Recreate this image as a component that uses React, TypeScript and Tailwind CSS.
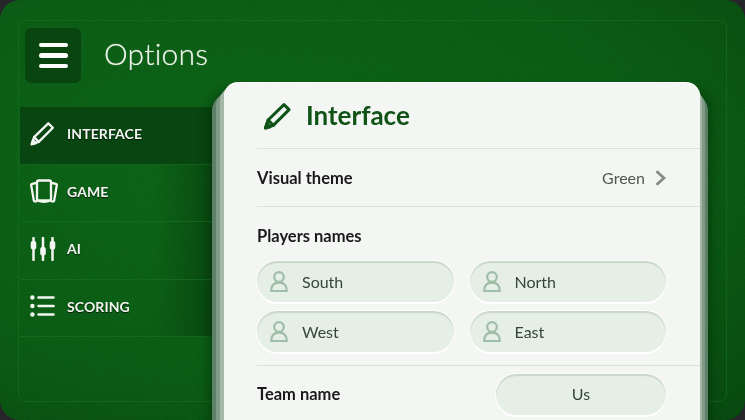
import React from 'react';

const FONT = "font-['Lato','Liberation_Sans',sans-serif]";

const PencilIcon: React.FC<{ className?: string; width?: string }> = ({ className, width = '2.8' }) => (
  <svg viewBox="0 0 28 28" fill="none" stroke="currentColor" strokeWidth={width} strokeLinejoin="round" strokeLinecap="round" className={className}>
    <path d="M2 26 L4.6 18 L20.5 2.6 L25.6 7.6 L9.8 23.4 Z" />
    <path d="M4.6 18 L9.8 23.4" />
    <path d="M2 26 L3.4 21.6 L6.6 24.8 Z" fill="currentColor" />
  </svg>
);

const CardsIcon = () => (
  <svg viewBox="0 0 28 25" fill="none" stroke="currentColor" strokeWidth="2.3" strokeLinejoin="round" className="h-[25px] w-[28px]">
    <path d="M6 4 L2.2 4.8 Q1 5 1.2 6.2 L3.8 21.4 Q4 22.4 5 22.4 L7 22.4" />
    <path d="M22 4 L25.8 4.8 Q27 5 26.8 6.2 L24.2 21.4 Q24 22.4 23 22.4 L21 22.4" />
    <rect x="7" y="1.5" width="14" height="20" rx="1.8" />
    <path d="M7 21.5 Q14 24 21 21.5" />
  </svg>
);

const SlidersIcon = () => (
  <svg viewBox="0 0 26 24" fill="none" stroke="currentColor" strokeWidth="2.5" strokeLinecap="round" className="h-[24px] w-[26px]">
    <path d="M3.5 1 V23 M13 1 V23 M22.5 1 V23" />
    <path d="M3.5 6.5 V10 M13 12.5 V16 M22.5 6.5 V10" strokeWidth="5.6" />
  </svg>
);

const ListIcon = () => (
  <svg viewBox="0 0 25 22" fill="none" stroke="currentColor" strokeWidth="2.6" strokeLinecap="round" className="h-[22px] w-[25px]">
    <path d="M8.5 2.5 H23.5 M8.5 11 H23.5 M8.5 19.5 H23.5" />
    <circle cx="2.4" cy="2.5" r="2.2" fill="currentColor" stroke="none" />
    <circle cx="2.4" cy="11" r="2.2" fill="currentColor" stroke="none" />
    <circle cx="2.4" cy="19.5" r="2.2" fill="currentColor" stroke="none" />
  </svg>
);

const PersonIcon = () => (
  <svg viewBox="0 0 18 21" fill="none" stroke="currentColor" strokeWidth="2.2" strokeLinejoin="round" className="h-[21px] w-[18px] shrink-0 text-[#a0bda7]">
    <circle cx="9" cy="6" r="4.8" />
    <path d="M1.2 20 Q1.2 11.6 9 11.6 Q16.8 11.6 16.8 20 Z" />
  </svg>
);

const Chevron = () => (
  <svg viewBox="0 0 11 16" fill="none" stroke="currentColor" strokeWidth="2.8" className="h-[16px] w-[11px] text-[#868c88]">
    <path d="M1.5 1.2 L9 8 L1.5 14.8" />
  </svg>
);

const NavRow: React.FC<{ label: string; active?: boolean; icon: React.ReactNode }> = ({ label, active, icon }) => (
  <div
    className={`flex h-[57.5px] items-center border-b border-[#177020]/70 pb-[3px] pl-[10px] text-[#f2f5f0] ${
      active ? 'bg-[#084510]' : ''
    }`}
  >
    <div className="flex w-[37px] items-center">{icon}</div>
    <span className="text-[14px] font-bold tracking-[0.1px] [text-shadow:0_1px_1px_rgba(0,0,0,0.7)]">{label}</span>
  </div>
);

const PILL =
  'h-[41px] rounded-full bg-[#e5efe6] text-[16px] text-[#36443a] shadow-[inset_0_2px_1px_rgba(90,120,95,0.2),0_2px_0_#fff,0_0_0_1px_rgba(255,255,255,0.7)]';

const NameInput: React.FC<{ name: string }> = ({ name }) => (
  <div className={`flex items-center gap-[14px] pl-[13px] ${PILL}`}>
    <PersonIcon />
    <span>{name}</span>
  </div>
);

export default function App() {
  return (
    <div className={`h-[420px] w-[745px] overflow-hidden bg-[#26262a] ${FONT}`}>
      <div className="relative h-[420px] rounded-[20px] bg-[radial-gradient(ellipse_at_35%_40%,#0c5e16_0%,#0a5513_60%,#07440e_100%)] pb-[18px] pl-[18px] pr-[18px] pt-[20px]">
        <svg className="pointer-events-none absolute inset-0 h-full w-full rounded-[20px] opacity-30 mix-blend-overlay">
          <filter id="felt">
            <feTurbulence type="fractalNoise" baseFrequency="0.9" numOctaves="2" stitchTiles="stitch" />
            <feColorMatrix type="saturate" values="0" />
          </filter>
          <rect width="100%" height="100%" filter="url(#felt)" />
        </svg>

        <div className="relative h-[382px] rounded-[8px] border border-[#16701f]/60 pl-[1px]">
          <div className="flex h-[62px] items-end pl-[5px]">
            <div className="flex h-[55px] w-[56px] flex-col items-center justify-center gap-[6px] rounded-[6px] bg-[#094510]">
              <span className="h-[4.5px] w-[29px] rounded-full bg-white" />
              <span className="h-[4.5px] w-[29px] rounded-full bg-white" />
              <span className="h-[4.5px] w-[29px] rounded-full bg-white" />
            </div>
            <h1 className="mb-[10px] ml-[23px] text-[30px] font-light leading-[40px] tracking-[0.2px] text-[#eef3ea] [text-shadow:0_0_1px_rgba(238,243,234,0.7)]">Options</h1>
          </div>

          <div className="flex items-start">
            <nav className="mt-[24px] w-[192px] shrink-0 bg-[linear-gradient(90deg,transparent_70%,rgba(5,50,10,0.5))]">
              <NavRow label="INTERFACE" active icon={<PencilIcon className="h-[25px] w-[25px]" width="2.6" />} />
              <NavRow label="GAME" icon={<CardsIcon />} />
              <NavRow label="AI" icon={<SlidersIcon />} />
              <NavRow label="SCORING" icon={<ListIcon />} />
            </nav>

            <div className="relative ml-[12px] w-[476px] shrink-0">
              <div className="absolute -left-[12px] -right-[8px] bottom-0 top-[10px] rounded-[18px] bg-[#5f8068] shadow-[0_0_14px_rgba(0,30,5,0.6)]" />
              <div className="absolute -left-[8px] -right-[5px] bottom-0 top-[7px] rounded-[16px] bg-[#7f9a86]" />
              <div className="absolute -left-[4px] -right-[2px] bottom-0 top-[3px] rounded-[15px] bg-[#a3b8a8]" />

              <div className="relative rounded-[14px] bg-[#f4f6f4] pb-[20px] pl-[33px] shadow-[0_-1px_0_#fff]">
                <div className="flex h-[66px] items-center gap-[14px] border-b border-[#dde0dc] text-[#0f5316]">
                  <PencilIcon className="ml-[6px] h-[28px] w-[29px]" width="3" />
                  <h2 className="text-[26px] font-bold">Interface</h2>
                </div>

                <div className="flex h-[58px] items-center justify-between border-b border-[#dde0dc] pr-[34px]">
                  <span className="pt-[2px] text-[16.5px] font-bold text-[#1a1a1a]">Visual theme</span>
                  <div className="flex items-center gap-[10px]">
                    <span className="text-[16px] text-[#525854]">Green</span>
                    <Chevron />
                  </div>
                </div>

                <div className="border-b border-[#dde0dc] pb-[13px] pr-[34px] pt-[18px]">
                  <div className="text-[16.5px] font-bold leading-[22px] text-[#1a1a1a]">Players names</div>
                  <div className="mt-[14px] grid grid-cols-2 gap-x-[16px] gap-y-[9px]">
                    <NameInput name="South" />
                    <NameInput name="North" />
                    <NameInput name="West" />
                    <NameInput name="East" />
                  </div>
                </div>

                <div className="flex h-[56px] items-center justify-between pr-[34px]">
                  <span className="text-[16.5px] font-bold text-[#1a1a1a]">Team name</span>
                  <div className={`flex w-[170px] items-center justify-center ${PILL}`}>Us</div>
                </div>
              </div>
            </div>
          </div>
        </div>
      </div>
    </div>
  );
}
